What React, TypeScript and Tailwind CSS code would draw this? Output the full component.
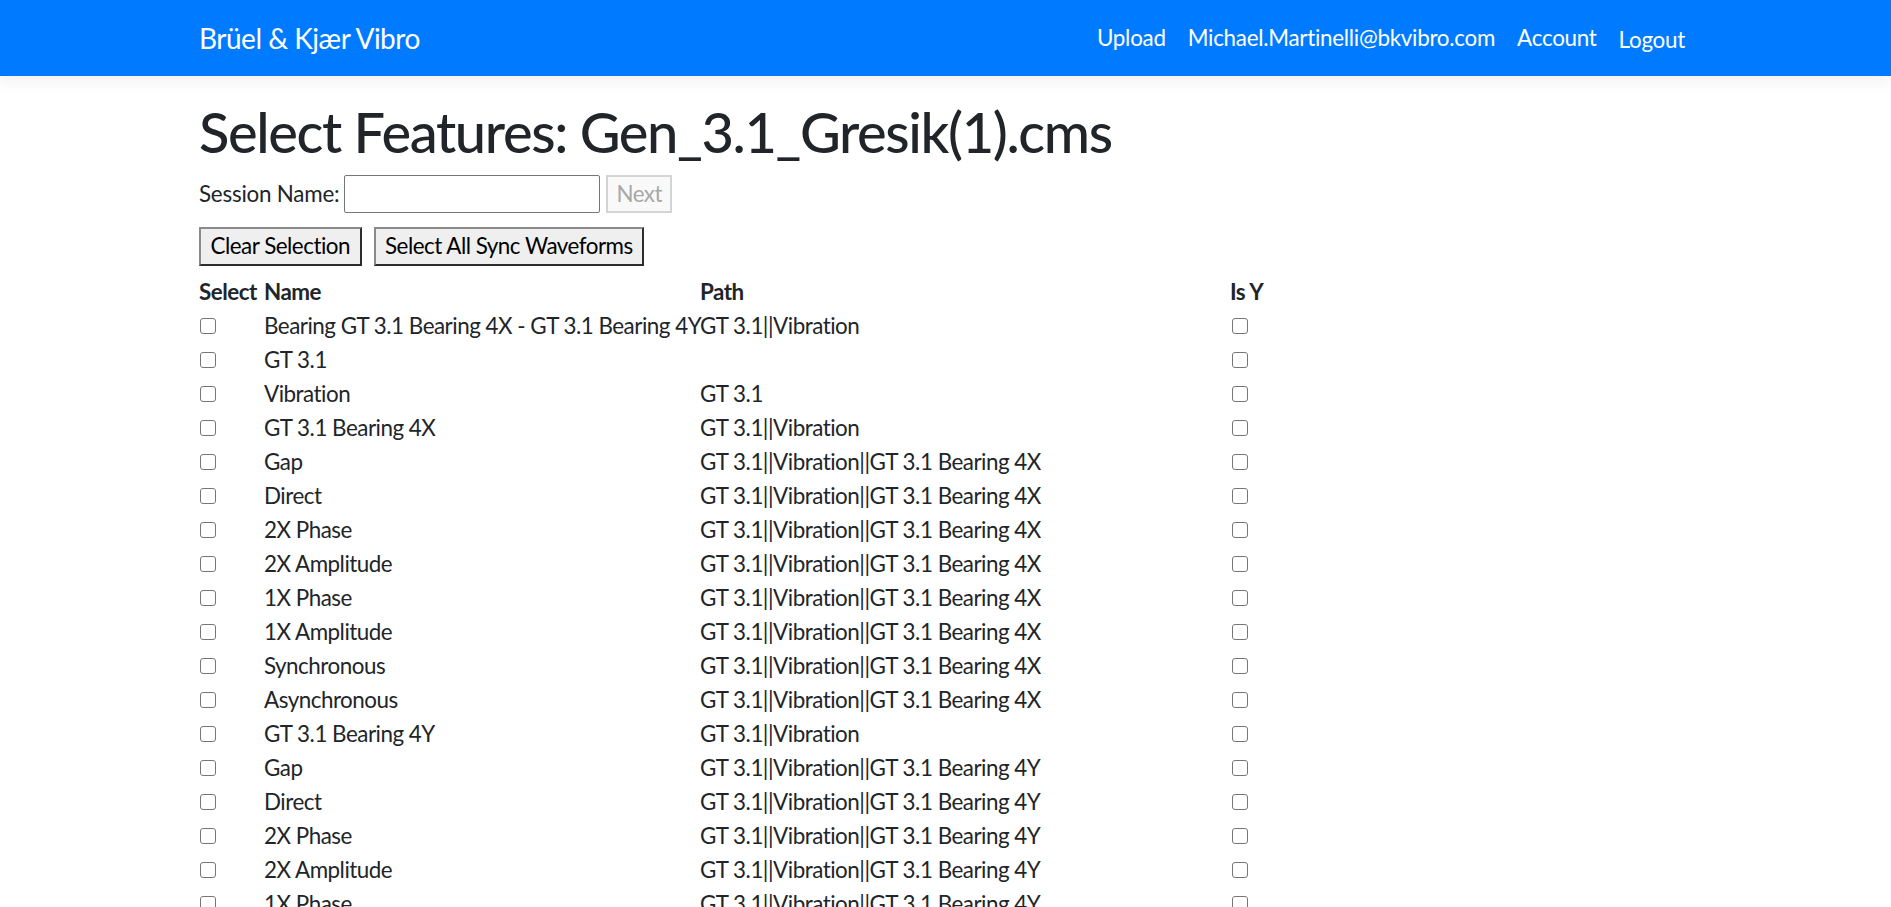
import React from 'react';

type Row = { name: string; path: string };

const bx = 'GT 3.1||Vibration||GT 3.1 Bearing 4X';
const by = 'GT 3.1||Vibration||GT 3.1 Bearing 4Y';
const leaves = ['Gap', 'Direct', '2X Phase', '2X Amplitude', '1X Phase', '1X Amplitude', 'Synchronous', 'Asynchronous'];

const rows: Row[] = [
  { name: 'Bearing GT 3.1 Bearing 4X - GT 3.1 Bearing 4Y', path: 'GT 3.1||Vibration' },
  { name: 'GT 3.1', path: '' },
  { name: 'Vibration', path: 'GT 3.1' },
  { name: 'GT 3.1 Bearing 4X', path: 'GT 3.1||Vibration' },
  ...leaves.map((n) => ({ name: n, path: bx })),
  { name: 'GT 3.1 Bearing 4Y', path: 'GT 3.1||Vibration' },
  ...leaves.map((n) => ({ name: n, path: by })),
];

function Check() {
  return <span className="ml-px block h-[16px] w-[16px] rounded-[3px] border-[1.5px] border-[#767676] bg-white" />;
}

export default function App() {
  return (
    <div className="min-h-screen bg-white text-[22.4px] leading-[34px] tracking-[-0.022em] text-[#212529]" style={{ fontFamily: "'Segoe UI', Lato, sans-serif" }}>
      {/* navbar */}
      <nav className="h-[76px] bg-[#007bff] shadow-[0_6px_16px_rgba(0,0,0,0.06)]">
        <div className="mx-auto flex h-full w-[1493px] items-center">
          <span className="text-[28px] text-white">Brüel &amp; Kjær Vibro</span>
          <ul className="ml-auto mr-[-4px] flex items-center tracking-[-0.012em] text-white">
            <li className="px-[11px]">Upload</li>
            <li className="px-[11px]">Michael.Martinelli@bkvibro.com</li>
            <li className="px-[11px]">Account</li>
            <li className="px-[11px] pt-[3px]">Logout</li>
          </ul>
        </div>
      </nav>

      <main className="mx-auto w-[1493px]">
        <h1 className="mt-[22px] text-[56px] font-medium leading-[67px] tracking-[-0.0245em]">Select Features: Gen_3.1_Gresik(1).cms</h1>

        <div className="mt-[10px] flex h-[38px] items-center">
          <label className="mr-[5px] tracking-[-0.01em]">Session Name:</label>
          <input type="text" className="h-[38px] w-[256px] rounded-[2px] border border-[#767676] bg-white px-2 outline-none" />
          <button disabled className="ml-[6px] h-[38px] border-2 border-[#d4d4d4] bg-[#f9f9f9] px-[8px] leading-none text-[#a8a8a8]">
            Next
          </button>
        </div>

        <div className="mt-[14px] flex h-[39px] gap-[12px]">
          <button className="border-2 border-b-[#2d2d2d] border-l-[#8a8a8a] border-r-[#2d2d2d] border-t-[#8a8a8a] bg-[#efefef] px-[9.5px] leading-none text-black">
            Clear Selection
          </button>
          <button className="border-2 border-b-[#2d2d2d] border-l-[#8a8a8a] border-r-[#2d2d2d] border-t-[#8a8a8a] bg-[#efefef] px-[9.5px] leading-none text-black">
            Select All Sync Waveforms
          </button>
        </div>

        <div className="mt-[9px]">
          <div className="grid h-[34px] grid-cols-[65px_436px_530px_1fr] items-center font-bold">
            <span>Select</span>
            <span>Name</span>
            <span>Path</span>
            <span>Is Y</span>
          </div>
          {rows.map((r, i) => (
            <div key={i} className="grid h-[34px] grid-cols-[65px_436px_530px_1fr] items-center">
              <span className="flex items-center">
                <Check />
              </span>
              <span className="whitespace-nowrap">{r.name}</span>
              <span className="whitespace-nowrap">{r.path}</span>
              <span className="flex items-center pl-[1px]">
                <Check />
              </span>
            </div>
          ))}
        </div>
      </main>
    </div>
  );
}
